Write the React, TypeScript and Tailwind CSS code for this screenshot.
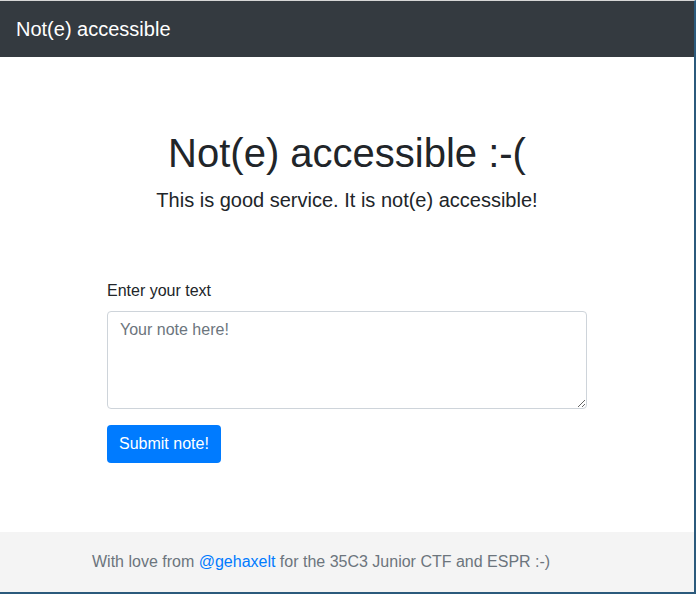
export default function App() {
  return (
    <div
      className="w-[696px] h-[594px] flex flex-col bg-white overflow-hidden border-t border-t-[#d6d6d6] border-r-2 border-r-[#2b5a7c] border-b-2 border-b-[#2b5a7c] text-[#212529]"
      style={{ fontFamily: '"Liberation Sans", Arial, sans-serif' }}
    >
      <nav className="h-14 shrink-0 bg-[#343a40] px-4 flex items-center">
        <span className="text-white text-xl leading-[30px]">Not(e) accessible</span>
      </nav>

      <main className="flex-1 pt-[72px]">
        <h1 className="text-[40px] leading-[48px] text-center mb-2">Not(e) accessible :-(</h1>
        <p className="text-xl leading-[30px] text-center">
          This is good service. It is not(e) accessible!
        </p>

        <form className="mt-16 ml-[107px] w-[480px]" onSubmit={(e) => e.preventDefault()}>
          <label htmlFor="note" className="block text-base leading-6 mb-2">
            Enter your text
          </label>
          <textarea
            id="note"
            placeholder="Your note here!"
            className="block w-full h-[98px] px-3 py-1.5 text-base leading-6 border border-[#ced4da] rounded placeholder:text-[#6c757d] outline-none"
          />
          <button className="mt-4 h-[38px] px-3 bg-[#007bff] text-white text-base rounded">
            Submit note!
          </button>
        </form>
      </main>

      <footer className="h-[60px] shrink-0 bg-[#f4f4f4] flex items-center pl-[92px] text-base text-[#6c757d]">
        <span>
          With love from <a href="#" className="text-[#007bff]">@gehaxelt</a> for the 35C3 Junior CTF and ESPR :-)
        </span>
      </footer>
    </div>
  );
}
